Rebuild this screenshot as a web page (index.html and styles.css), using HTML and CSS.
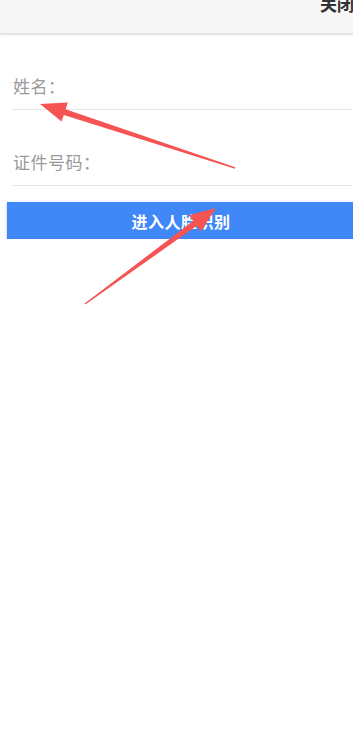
FILE: index.html
```html
<!DOCTYPE html>
<html>
    <head>
        <meta charset="utf-8">
        <title>人脸识别</title>
        <link rel="stylesheet" href="styles.css">
    </head>
    <body>
        <div class="top-bar">
            <span class="close">关闭</span>
        </div>

        <div class="form">
            <div class="field"><span class="label">姓名：</span></div>
            <div class="field"><span class="label">证件号码：</span></div>
            <button class="submit">进入人脸识别</button>
        </div>

        <svg class="marks" width="353" height="740" viewBox="0 0 353 740">
            <polygon points="40,104 67.8,102.6 65.6,109.2 235.2,167.3 234.8,168.7 63.8,115 61.6,121.6"/>
            <polygon points="216,208 189.1,215.3 193.2,221 84.6,303.4 85.4,304.6 196.8,225.8 200.9,231.5"/>
        </svg>
    </body>
</html>
```

FILE: styles.css
```css
body { margin: 0; background: #fff; font-family: "Noto Sans CJK SC", "Noto Sans", sans-serif; overflow: hidden; }
.top-bar { height: 33px; background: #f7f7f7; border-bottom: 1px solid #dcdcdc; box-shadow: 0 1px 2px #e2e2e2; display: flex; justify-content: flex-end; align-items: flex-start; overflow: hidden; }
.close { font-size: 17px; line-height: 17px; font-weight: bold; color: #333; margin-top: -5px; margin-right: -1px; }
.form { padding-left: 12px; }
.field { height: 75px; border-bottom: 1px solid #e6e6e6; display: flex; align-items: flex-end; }
.label { font-size: 17px; line-height: 22px; color: #9a9a9a; margin-left: 1px; margin-bottom: 12px; letter-spacing: 0.5px; }
.submit { display: block; margin: 16px -2px 0 -5px; width: calc(100% + 7px); height: 37px; border: none; background: #4088f8; color: #fff; font-family: inherit; font-size: 16px; font-weight: bold; box-shadow: 0 1px 3px #b8c4d4; letter-spacing: 0.5px; }
.marks { position: absolute; top: 0; left: 0; pointer-events: none; }
.marks polygon { fill: #f65353; }
```
